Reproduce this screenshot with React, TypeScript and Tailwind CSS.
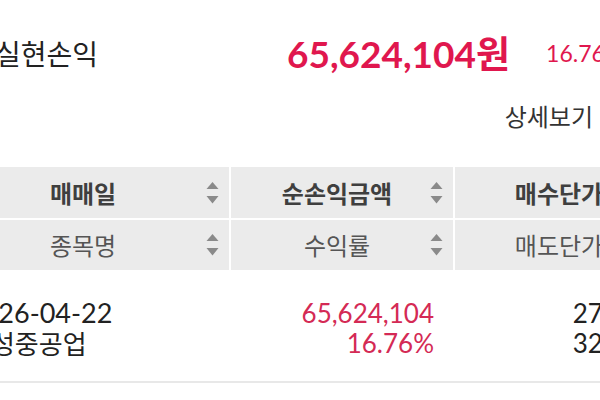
import React from "react";

const KR = "font-['Noto_Sans_CJK_KR',sans-serif]";
const LATO = "font-['Lato','Noto_Sans_CJK_KR',sans-serif]";

function SortIcon() {
  return (
    <svg width="13" height="22" viewBox="0 0 13 22" className="shrink-0">
      <path d="M6.5 0 L12.5 7 L0.5 7 Z" fill="#8a8a8a" />
      <path d="M0.5 14 L12.5 14 L6.5 21.5 Z" fill="#8a8a8a" />
    </svg>
  );
}

function HeadCell({ label, bold }: { label: string; bold?: boolean }) {
  return (
    <div className="flex items-center bg-[#ebebeb] pl-[13px] pr-[10px]">
      <div
        className={`flex-1 whitespace-nowrap text-center text-[24px] leading-none ${KR} ${
          bold ? "font-bold text-[#3f3f3f]" : "font-normal text-[#555555]"
        }`}
      >
        {label}
      </div>
      <SortIcon />
    </div>
  );
}

export default function App() {
  return (
    <div className="w-[600px] h-[400px] overflow-hidden bg-white">
      <div className="pt-[30px]">
        <div className="flex h-[46px] items-center">
          <div className={`ml-[-5px] w-[292px] shrink-0 text-[28px] leading-none text-[#222222] ${KR}`}>
            실현손익
          </div>
          <div className={`shrink-0 whitespace-nowrap text-[37px] font-bold leading-none text-[#e0174e] ${LATO}`}>
            65,624,104원
          </div>
          <div className={`ml-[36px] shrink-0 whitespace-nowrap text-[23px] leading-none text-[#e0174e] ${LATO}`}>
            16.76%
          </div>
        </div>
        <div className="mt-[25px] flex h-[30px] items-center justify-end pr-[7px]">
          <span className={`text-[24px] leading-none text-[#333333] ${KR}`}>상세보기</span>
        </div>
      </div>

      <div className="mt-[36px] ml-[-53px] w-[760px]">
        <div className="grid grid-cols-[282px_222px_218px] gap-x-[2px]">
          <div className="h-[51px] grid">
            <HeadCell label="매매일" bold />
          </div>
          <div className="h-[51px] grid">
            <HeadCell label="순손익금액" bold />
          </div>
          <div className="h-[51px] grid">
            <HeadCell label="매수단가" bold />
          </div>
        </div>
        <div className="mt-[2px] grid grid-cols-[282px_222px_218px] gap-x-[2px]">
          <div className="h-[50px] grid">
            <HeadCell label="종목명" />
          </div>
          <div className="h-[50px] grid">
            <HeadCell label="수익률" />
          </div>
          <div className="h-[50px] grid">
            <HeadCell label="매도단가" />
          </div>
        </div>
        <div
          className={`grid grid-cols-[282px_222px_218px] gap-x-[2px] border-b-2 border-[#e8e8e8] pt-[28px] pb-[23px] text-[26px] leading-[30px] ${LATO}`}
        >
          <div className="pl-[20px] text-[#222222]">
            <div className="text-[27px]">2026-04-22</div>
            <div className={KR}>삼성중공업</div>
          </div>
          <div className="pr-[19px] text-right text-[#d42a55]">
            <div>65,624,104</div>
            <div>16.76%</div>
          </div>
          <div className="pr-[19px] text-right text-[#222222]">
            <div>27,800</div>
            <div>32,460</div>
          </div>
        </div>
      </div>
    </div>
  );
}
